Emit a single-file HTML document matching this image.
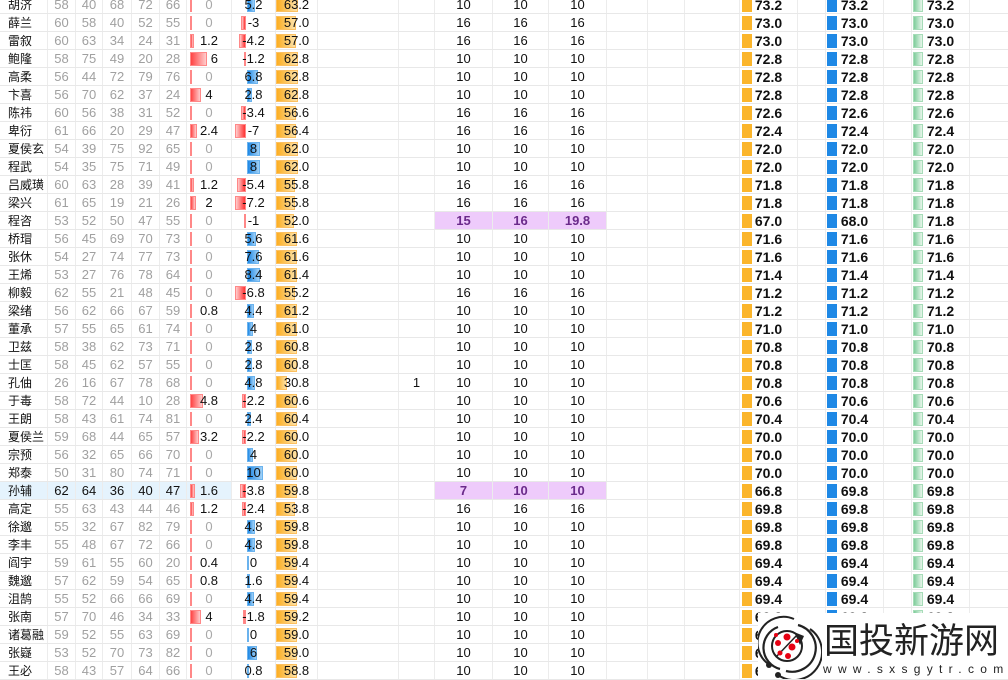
<!DOCTYPE html>
<html><head><meta charset="utf-8"><style>
*{margin:0;padding:0;box-sizing:border-box}
body{width:1008px;height:679px;overflow:hidden;background:#fff;font-family:"Liberation Sans","Noto Sans CJK SC",sans-serif;font-size:13px;color:#111;position:relative}
#t{position:absolute;left:0;top:-4px}
.r{display:flex;height:18px;border-bottom:1px solid #e8e8e8}
.r>div{height:17px;line-height:18px;text-align:center;border-right:1px solid #ececec;position:relative;white-space:nowrap}
.r>div:nth-child(1){width:48px;text-align:left;padding-left:8px;font-size:12px}
.r>div:nth-child(2){width:28px;color:#a0a0a0}
.r>div:nth-child(3){width:27px;color:#a0a0a0}
.r>div:nth-child(4){width:29px;color:#a0a0a0}
.r>div:nth-child(5){width:28px;color:#a0a0a0}
.r>div:nth-child(6){width:27px;color:#a0a0a0}
.r>div:nth-child(7){width:45px}
.r>div:nth-child(8){width:44px}
.r>div:nth-child(9){width:42px}
.r>div:nth-child(10){width:81px}
.r>div:nth-child(11){width:36px}
.r>div:nth-child(12){width:58px}
.r>div:nth-child(13){width:56px}
.r>div:nth-child(14){width:58px}
.r>div:nth-child(15){width:41px}
.r>div:nth-child(16){width:37px}
.r>div:nth-child(17){width:55px}
.r>div:nth-child(18){width:58px;font-weight:bold;font-size:14px}
.r>div:nth-child(19){width:28px}
.r>div:nth-child(20){width:58px;font-weight:bold;font-size:14px}
.r>div:nth-child(21){width:28px}
.r>div:nth-child(22){width:58px;font-weight:bold;font-size:14px}
.r>div:nth-child(23){width:38px;border-right:none}
.r span{position:relative}
.g{color:#a8a8a8}
i{position:absolute;top:2px;height:14px;display:block}
.rb{left:3px;background:linear-gradient(90deg,#f44,#fcc);border:1px solid #f88}
.bp{left:15px;background:linear-gradient(90deg,#1e88e5,#9fd0f7);border:1px solid #6bb3ee}
.bn{right:29px;background:linear-gradient(270deg,#f33,#fcc);border:1px solid #f88}
.ob{left:0;background:linear-gradient(90deg,#fcae22,#fde2a8);border:1px solid #fcc060}
.o2{left:2px;width:10px;background:#fbb52b}
.b2{left:1px;width:10px;background:#1e88e5}
.g2{left:1px;width:10px;background:linear-gradient(90deg,#7fcd9b,#e6f5ea);border:1px solid #a6dcb8}
.p{background:#eecbfb;color:#6a2a8a;font-weight:bold}
.hl>div:nth-child(-n+7){background:#e5f3fd}
.hl>div:nth-child(n+2):nth-child(-n+6){color:#111}
#logo{position:absolute;left:758px;top:613px;width:250px;height:66px;background:#fff}
</style></head><body>
<div id="t">
<div class="r"><div>胡济</div><div>58</div><div>40</div><div>68</div><div>72</div><div>66</div><div><i class="rb" style="width:2px"></i><span class="g">0</span></div><div><i class="bp" style="width:8px"></i><span>5.2</span></div><div><i class="ob" style="width:22px"></i><span>63.2</span></div><div></div><div></div><div>10</div><div>10</div><div>10</div><div></div><div></div><div></div><div><i class="o2"></i><span>73.2</span></div><div></div><div><i class="b2"></i><span>73.2</span></div><div></div><div><i class="g2"></i><span>73.2</span></div><div></div></div>
<div class="r"><div>薛兰</div><div>60</div><div>58</div><div>40</div><div>52</div><div>55</div><div><i class="rb" style="width:2px"></i><span class="g">0</span></div><div><i class="bn" style="width:5px"></i><span>-3</span></div><div><i class="ob" style="width:20px"></i><span>57.0</span></div><div></div><div></div><div>16</div><div>16</div><div>16</div><div></div><div></div><div></div><div><i class="o2"></i><span>73.0</span></div><div></div><div><i class="b2"></i><span>73.0</span></div><div></div><div><i class="g2"></i><span>73.0</span></div><div></div></div>
<div class="r"><div>雷叙</div><div>60</div><div>63</div><div>34</div><div>24</div><div>31</div><div><i class="rb" style="width:4px"></i><span>1.2</span></div><div><i class="bn" style="width:7px"></i><span>-4.2</span></div><div><i class="ob" style="width:20px"></i><span>57.0</span></div><div></div><div></div><div>16</div><div>16</div><div>16</div><div></div><div></div><div></div><div><i class="o2"></i><span>73.0</span></div><div></div><div><i class="b2"></i><span>73.0</span></div><div></div><div><i class="g2"></i><span>73.0</span></div><div></div></div>
<div class="r"><div>鲍隆</div><div>58</div><div>75</div><div>49</div><div>20</div><div>28</div><div><i class="rb" style="width:17px"></i><span>&nbsp;&nbsp;&nbsp;6</span></div><div><i class="bn" style="width:2px"></i><span>-1.2</span></div><div><i class="ob" style="width:22px"></i><span>62.8</span></div><div></div><div></div><div>10</div><div>10</div><div>10</div><div></div><div></div><div></div><div><i class="o2"></i><span>72.8</span></div><div></div><div><i class="b2"></i><span>72.8</span></div><div></div><div><i class="g2"></i><span>72.8</span></div><div></div></div>
<div class="r"><div>高柔</div><div>56</div><div>44</div><div>72</div><div>79</div><div>76</div><div><i class="rb" style="width:2px"></i><span class="g">0</span></div><div><i class="bp" style="width:11px"></i><span>6.8</span></div><div><i class="ob" style="width:22px"></i><span>62.8</span></div><div></div><div></div><div>10</div><div>10</div><div>10</div><div></div><div></div><div></div><div><i class="o2"></i><span>72.8</span></div><div></div><div><i class="b2"></i><span>72.8</span></div><div></div><div><i class="g2"></i><span>72.8</span></div><div></div></div>
<div class="r"><div>卞喜</div><div>56</div><div>70</div><div>62</div><div>37</div><div>24</div><div><i class="rb" style="width:11px"></i><span>4</span></div><div><i class="bp" style="width:5px"></i><span>2.8</span></div><div><i class="ob" style="width:22px"></i><span>62.8</span></div><div></div><div></div><div>10</div><div>10</div><div>10</div><div></div><div></div><div></div><div><i class="o2"></i><span>72.8</span></div><div></div><div><i class="b2"></i><span>72.8</span></div><div></div><div><i class="g2"></i><span>72.8</span></div><div></div></div>
<div class="r"><div>陈祎</div><div>60</div><div>56</div><div>38</div><div>31</div><div>52</div><div><i class="rb" style="width:2px"></i><span class="g">0</span></div><div><i class="bn" style="width:5px"></i><span>-3.4</span></div><div><i class="ob" style="width:20px"></i><span>56.6</span></div><div></div><div></div><div>16</div><div>16</div><div>16</div><div></div><div></div><div></div><div><i class="o2"></i><span>72.6</span></div><div></div><div><i class="b2"></i><span>72.6</span></div><div></div><div><i class="g2"></i><span>72.6</span></div><div></div></div>
<div class="r"><div>卑衍</div><div>61</div><div>66</div><div>20</div><div>29</div><div>47</div><div><i class="rb" style="width:7px"></i><span>2.4</span></div><div><i class="bn" style="width:11px"></i><span>-7</span></div><div><i class="ob" style="width:20px"></i><span>56.4</span></div><div></div><div></div><div>16</div><div>16</div><div>16</div><div></div><div></div><div></div><div><i class="o2"></i><span>72.4</span></div><div></div><div><i class="b2"></i><span>72.4</span></div><div></div><div><i class="g2"></i><span>72.4</span></div><div></div></div>
<div class="r"><div>夏侯玄</div><div>54</div><div>39</div><div>75</div><div>92</div><div>65</div><div><i class="rb" style="width:2px"></i><span class="g">0</span></div><div><i class="bp" style="width:13px"></i><span>8</span></div><div><i class="ob" style="width:22px"></i><span>62.0</span></div><div></div><div></div><div>10</div><div>10</div><div>10</div><div></div><div></div><div></div><div><i class="o2"></i><span>72.0</span></div><div></div><div><i class="b2"></i><span>72.0</span></div><div></div><div><i class="g2"></i><span>72.0</span></div><div></div></div>
<div class="r"><div>程武</div><div>54</div><div>35</div><div>75</div><div>71</div><div>49</div><div><i class="rb" style="width:2px"></i><span class="g">0</span></div><div><i class="bp" style="width:13px"></i><span>8</span></div><div><i class="ob" style="width:22px"></i><span>62.0</span></div><div></div><div></div><div>10</div><div>10</div><div>10</div><div></div><div></div><div></div><div><i class="o2"></i><span>72.0</span></div><div></div><div><i class="b2"></i><span>72.0</span></div><div></div><div><i class="g2"></i><span>72.0</span></div><div></div></div>
<div class="r"><div>吕威璜</div><div>60</div><div>63</div><div>28</div><div>39</div><div>41</div><div><i class="rb" style="width:4px"></i><span>1.2</span></div><div><i class="bn" style="width:9px"></i><span>-5.4</span></div><div><i class="ob" style="width:19px"></i><span>55.8</span></div><div></div><div></div><div>16</div><div>16</div><div>16</div><div></div><div></div><div></div><div><i class="o2"></i><span>71.8</span></div><div></div><div><i class="b2"></i><span>71.8</span></div><div></div><div><i class="g2"></i><span>71.8</span></div><div></div></div>
<div class="r"><div>梁兴</div><div>61</div><div>65</div><div>19</div><div>21</div><div>26</div><div><i class="rb" style="width:6px"></i><span>2</span></div><div><i class="bn" style="width:11px"></i><span>-7.2</span></div><div><i class="ob" style="width:19px"></i><span>55.8</span></div><div></div><div></div><div>16</div><div>16</div><div>16</div><div></div><div></div><div></div><div><i class="o2"></i><span>71.8</span></div><div></div><div><i class="b2"></i><span>71.8</span></div><div></div><div><i class="g2"></i><span>71.8</span></div><div></div></div>
<div class="r"><div>程咨</div><div>53</div><div>52</div><div>50</div><div>47</div><div>55</div><div><i class="rb" style="width:2px"></i><span class="g">0</span></div><div><i class="bn" style="width:2px"></i><span>-1</span></div><div><i class="ob" style="width:18px"></i><span>52.0</span></div><div></div><div></div><div class="p">15</div><div class="p">16</div><div class="p">19.8</div><div></div><div></div><div></div><div><i class="o2"></i><span>67.0</span></div><div></div><div><i class="b2"></i><span>68.0</span></div><div></div><div><i class="g2"></i><span>71.8</span></div><div></div></div>
<div class="r"><div>桥瑁</div><div>56</div><div>45</div><div>69</div><div>70</div><div>73</div><div><i class="rb" style="width:2px"></i><span class="g">0</span></div><div><i class="bp" style="width:9px"></i><span>5.6</span></div><div><i class="ob" style="width:21px"></i><span>61.6</span></div><div></div><div></div><div>10</div><div>10</div><div>10</div><div></div><div></div><div></div><div><i class="o2"></i><span>71.6</span></div><div></div><div><i class="b2"></i><span>71.6</span></div><div></div><div><i class="g2"></i><span>71.6</span></div><div></div></div>
<div class="r"><div>张休</div><div>54</div><div>27</div><div>74</div><div>77</div><div>73</div><div><i class="rb" style="width:2px"></i><span class="g">0</span></div><div><i class="bp" style="width:12px"></i><span>7.6</span></div><div><i class="ob" style="width:21px"></i><span>61.6</span></div><div></div><div></div><div>10</div><div>10</div><div>10</div><div></div><div></div><div></div><div><i class="o2"></i><span>71.6</span></div><div></div><div><i class="b2"></i><span>71.6</span></div><div></div><div><i class="g2"></i><span>71.6</span></div><div></div></div>
<div class="r"><div>王烯</div><div>53</div><div>27</div><div>76</div><div>78</div><div>64</div><div><i class="rb" style="width:2px"></i><span class="g">0</span></div><div><i class="bp" style="width:13px"></i><span>8.4</span></div><div><i class="ob" style="width:21px"></i><span>61.4</span></div><div></div><div></div><div>10</div><div>10</div><div>10</div><div></div><div></div><div></div><div><i class="o2"></i><span>71.4</span></div><div></div><div><i class="b2"></i><span>71.4</span></div><div></div><div><i class="g2"></i><span>71.4</span></div><div></div></div>
<div class="r"><div>柳毅</div><div>62</div><div>55</div><div>21</div><div>48</div><div>45</div><div><i class="rb" style="width:2px"></i><span class="g">0</span></div><div><i class="bn" style="width:11px"></i><span>-6.8</span></div><div><i class="ob" style="width:19px"></i><span>55.2</span></div><div></div><div></div><div>16</div><div>16</div><div>16</div><div></div><div></div><div></div><div><i class="o2"></i><span>71.2</span></div><div></div><div><i class="b2"></i><span>71.2</span></div><div></div><div><i class="g2"></i><span>71.2</span></div><div></div></div>
<div class="r"><div>梁绪</div><div>56</div><div>62</div><div>66</div><div>67</div><div>59</div><div><i class="rb" style="width:2px"></i><span>0.8</span></div><div><i class="bp" style="width:7px"></i><span>4.4</span></div><div><i class="ob" style="width:21px"></i><span>61.2</span></div><div></div><div></div><div>10</div><div>10</div><div>10</div><div></div><div></div><div></div><div><i class="o2"></i><span>71.2</span></div><div></div><div><i class="b2"></i><span>71.2</span></div><div></div><div><i class="g2"></i><span>71.2</span></div><div></div></div>
<div class="r"><div>董承</div><div>57</div><div>55</div><div>65</div><div>61</div><div>74</div><div><i class="rb" style="width:2px"></i><span class="g">0</span></div><div><i class="bp" style="width:6px"></i><span>4</span></div><div><i class="ob" style="width:21px"></i><span>61.0</span></div><div></div><div></div><div>10</div><div>10</div><div>10</div><div></div><div></div><div></div><div><i class="o2"></i><span>71.0</span></div><div></div><div><i class="b2"></i><span>71.0</span></div><div></div><div><i class="g2"></i><span>71.0</span></div><div></div></div>
<div class="r"><div>卫兹</div><div>58</div><div>38</div><div>62</div><div>73</div><div>71</div><div><i class="rb" style="width:2px"></i><span class="g">0</span></div><div><i class="bp" style="width:5px"></i><span>2.8</span></div><div><i class="ob" style="width:21px"></i><span>60.8</span></div><div></div><div></div><div>10</div><div>10</div><div>10</div><div></div><div></div><div></div><div><i class="o2"></i><span>70.8</span></div><div></div><div><i class="b2"></i><span>70.8</span></div><div></div><div><i class="g2"></i><span>70.8</span></div><div></div></div>
<div class="r"><div>士匡</div><div>58</div><div>45</div><div>62</div><div>57</div><div>55</div><div><i class="rb" style="width:2px"></i><span class="g">0</span></div><div><i class="bp" style="width:5px"></i><span>2.8</span></div><div><i class="ob" style="width:21px"></i><span>60.8</span></div><div></div><div></div><div>10</div><div>10</div><div>10</div><div></div><div></div><div></div><div><i class="o2"></i><span>70.8</span></div><div></div><div><i class="b2"></i><span>70.8</span></div><div></div><div><i class="g2"></i><span>70.8</span></div><div></div></div>
<div class="r"><div>孔伷</div><div>26</div><div>16</div><div>67</div><div>78</div><div>68</div><div><i class="rb" style="width:2px"></i><span class="g">0</span></div><div><i class="bp" style="width:8px"></i><span>4.8</span></div><div><i class="ob" style="width:11px"></i><span>30.8</span></div><div></div><div>1</div><div>10</div><div>10</div><div>10</div><div></div><div></div><div></div><div><i class="o2"></i><span>70.8</span></div><div></div><div><i class="b2"></i><span>70.8</span></div><div></div><div><i class="g2"></i><span>70.8</span></div><div></div></div>
<div class="r"><div>于毒</div><div>58</div><div>72</div><div>44</div><div>10</div><div>28</div><div><i class="rb" style="width:13px"></i><span>4.8</span></div><div><i class="bn" style="width:4px"></i><span>-2.2</span></div><div><i class="ob" style="width:21px"></i><span>60.6</span></div><div></div><div></div><div>10</div><div>10</div><div>10</div><div></div><div></div><div></div><div><i class="o2"></i><span>70.6</span></div><div></div><div><i class="b2"></i><span>70.6</span></div><div></div><div><i class="g2"></i><span>70.6</span></div><div></div></div>
<div class="r"><div>王朗</div><div>58</div><div>43</div><div>61</div><div>74</div><div>81</div><div><i class="rb" style="width:2px"></i><span class="g">0</span></div><div><i class="bp" style="width:4px"></i><span>2.4</span></div><div><i class="ob" style="width:21px"></i><span>60.4</span></div><div></div><div></div><div>10</div><div>10</div><div>10</div><div></div><div></div><div></div><div><i class="o2"></i><span>70.4</span></div><div></div><div><i class="b2"></i><span>70.4</span></div><div></div><div><i class="g2"></i><span>70.4</span></div><div></div></div>
<div class="r"><div>夏侯兰</div><div>59</div><div>68</div><div>44</div><div>65</div><div>57</div><div><i class="rb" style="width:9px"></i><span>3.2</span></div><div><i class="bn" style="width:4px"></i><span>-2.2</span></div><div><i class="ob" style="width:21px"></i><span>60.0</span></div><div></div><div></div><div>10</div><div>10</div><div>10</div><div></div><div></div><div></div><div><i class="o2"></i><span>70.0</span></div><div></div><div><i class="b2"></i><span>70.0</span></div><div></div><div><i class="g2"></i><span>70.0</span></div><div></div></div>
<div class="r"><div>宗预</div><div>56</div><div>32</div><div>65</div><div>66</div><div>70</div><div><i class="rb" style="width:2px"></i><span class="g">0</span></div><div><i class="bp" style="width:6px"></i><span>4</span></div><div><i class="ob" style="width:21px"></i><span>60.0</span></div><div></div><div></div><div>10</div><div>10</div><div>10</div><div></div><div></div><div></div><div><i class="o2"></i><span>70.0</span></div><div></div><div><i class="b2"></i><span>70.0</span></div><div></div><div><i class="g2"></i><span>70.0</span></div><div></div></div>
<div class="r"><div>郑泰</div><div>50</div><div>31</div><div>80</div><div>74</div><div>71</div><div><i class="rb" style="width:2px"></i><span class="g">0</span></div><div><i class="bp" style="width:16px"></i><span>10</span></div><div><i class="ob" style="width:21px"></i><span>60.0</span></div><div></div><div></div><div>10</div><div>10</div><div>10</div><div></div><div></div><div></div><div><i class="o2"></i><span>70.0</span></div><div></div><div><i class="b2"></i><span>70.0</span></div><div></div><div><i class="g2"></i><span>70.0</span></div><div></div></div>
<div class="r hl"><div>孙辅</div><div>62</div><div>64</div><div>36</div><div>40</div><div>47</div><div><i class="rb" style="width:5px"></i><span>1.6</span></div><div><i class="bn" style="width:6px"></i><span>-3.8</span></div><div><i class="ob" style="width:21px"></i><span>59.8</span></div><div></div><div></div><div class="p">7</div><div class="p">10</div><div class="p">10</div><div></div><div></div><div></div><div><i class="o2"></i><span>66.8</span></div><div></div><div><i class="b2"></i><span>69.8</span></div><div></div><div><i class="g2"></i><span>69.8</span></div><div></div></div>
<div class="r"><div>高定</div><div>55</div><div>63</div><div>43</div><div>44</div><div>46</div><div><i class="rb" style="width:4px"></i><span>1.2</span></div><div><i class="bn" style="width:4px"></i><span>-2.4</span></div><div><i class="ob" style="width:19px"></i><span>53.8</span></div><div></div><div></div><div>16</div><div>16</div><div>16</div><div></div><div></div><div></div><div><i class="o2"></i><span>69.8</span></div><div></div><div><i class="b2"></i><span>69.8</span></div><div></div><div><i class="g2"></i><span>69.8</span></div><div></div></div>
<div class="r"><div>徐邈</div><div>55</div><div>32</div><div>67</div><div>82</div><div>79</div><div><i class="rb" style="width:2px"></i><span class="g">0</span></div><div><i class="bp" style="width:8px"></i><span>4.8</span></div><div><i class="ob" style="width:21px"></i><span>59.8</span></div><div></div><div></div><div>10</div><div>10</div><div>10</div><div></div><div></div><div></div><div><i class="o2"></i><span>69.8</span></div><div></div><div><i class="b2"></i><span>69.8</span></div><div></div><div><i class="g2"></i><span>69.8</span></div><div></div></div>
<div class="r"><div>李丰</div><div>55</div><div>48</div><div>67</div><div>72</div><div>66</div><div><i class="rb" style="width:2px"></i><span class="g">0</span></div><div><i class="bp" style="width:8px"></i><span>4.8</span></div><div><i class="ob" style="width:21px"></i><span>59.8</span></div><div></div><div></div><div>10</div><div>10</div><div>10</div><div></div><div></div><div></div><div><i class="o2"></i><span>69.8</span></div><div></div><div><i class="b2"></i><span>69.8</span></div><div></div><div><i class="g2"></i><span>69.8</span></div><div></div></div>
<div class="r"><div>阎宇</div><div>59</div><div>61</div><div>55</div><div>60</div><div>20</div><div><i class="rb" style="width:2px"></i><span>0.4</span></div><div><i class="bp" style="width:1px"></i><span>0</span></div><div><i class="ob" style="width:21px"></i><span>59.4</span></div><div></div><div></div><div>10</div><div>10</div><div>10</div><div></div><div></div><div></div><div><i class="o2"></i><span>69.4</span></div><div></div><div><i class="b2"></i><span>69.4</span></div><div></div><div><i class="g2"></i><span>69.4</span></div><div></div></div>
<div class="r"><div>魏邈</div><div>57</div><div>62</div><div>59</div><div>54</div><div>65</div><div><i class="rb" style="width:2px"></i><span>0.8</span></div><div><i class="bp" style="width:3px"></i><span>1.6</span></div><div><i class="ob" style="width:21px"></i><span>59.4</span></div><div></div><div></div><div>10</div><div>10</div><div>10</div><div></div><div></div><div></div><div><i class="o2"></i><span>69.4</span></div><div></div><div><i class="b2"></i><span>69.4</span></div><div></div><div><i class="g2"></i><span>69.4</span></div><div></div></div>
<div class="r"><div>沮鹄</div><div>55</div><div>52</div><div>66</div><div>66</div><div>69</div><div><i class="rb" style="width:2px"></i><span class="g">0</span></div><div><i class="bp" style="width:7px"></i><span>4.4</span></div><div><i class="ob" style="width:21px"></i><span>59.4</span></div><div></div><div></div><div>10</div><div>10</div><div>10</div><div></div><div></div><div></div><div><i class="o2"></i><span>69.4</span></div><div></div><div><i class="b2"></i><span>69.4</span></div><div></div><div><i class="g2"></i><span>69.4</span></div><div></div></div>
<div class="r"><div>张南</div><div>57</div><div>70</div><div>46</div><div>34</div><div>33</div><div><i class="rb" style="width:11px"></i><span>4</span></div><div><i class="bn" style="width:3px"></i><span>-1.8</span></div><div><i class="ob" style="width:21px"></i><span>59.2</span></div><div></div><div></div><div>10</div><div>10</div><div>10</div><div></div><div></div><div></div><div><i class="o2"></i><span>69.2</span></div><div></div><div><i class="b2"></i><span>69.2</span></div><div></div><div><i class="g2"></i><span>69.2</span></div><div></div></div>
<div class="r"><div>诸葛融</div><div>59</div><div>52</div><div>55</div><div>63</div><div>69</div><div><i class="rb" style="width:2px"></i><span class="g">0</span></div><div><i class="bp" style="width:1px"></i><span>0</span></div><div><i class="ob" style="width:21px"></i><span>59.0</span></div><div></div><div></div><div>10</div><div>10</div><div>10</div><div></div><div></div><div></div><div><i class="o2"></i><span>69.0</span></div><div></div><div><i class="b2"></i><span>69.0</span></div><div></div><div><i class="g2"></i><span>69.0</span></div><div></div></div>
<div class="r"><div>张嶷</div><div>53</div><div>52</div><div>70</div><div>73</div><div>82</div><div><i class="rb" style="width:2px"></i><span class="g">0</span></div><div><i class="bp" style="width:10px"></i><span>6</span></div><div><i class="ob" style="width:21px"></i><span>59.0</span></div><div></div><div></div><div>10</div><div>10</div><div>10</div><div></div><div></div><div></div><div><i class="o2"></i><span>69.0</span></div><div></div><div><i class="b2"></i><span>69.0</span></div><div></div><div><i class="g2"></i><span>69.0</span></div><div></div></div>
<div class="r"><div>王必</div><div>58</div><div>43</div><div>57</div><div>64</div><div>66</div><div><i class="rb" style="width:2px"></i><span class="g">0</span></div><div><i class="bp" style="width:1px"></i><span>0.8</span></div><div><i class="ob" style="width:21px"></i><span>58.8</span></div><div></div><div></div><div>10</div><div>10</div><div>10</div><div></div><div></div><div></div><div><i class="o2"></i><span>68.8</span></div><div></div><div><i class="b2"></i><span>68.8</span></div><div></div><div><i class="g2"></i><span>68.8</span></div><div></div></div>
</div>
<div id="logo">
<svg width="64" height="66" style="position:absolute;left:0;top:0">
<path d="M22 56 A22 22 0 0 1 20 14" fill="none" stroke="#222" stroke-width="2.2"/>
<path d="M12 52 A26 26 0 0 1 36 6" fill="none" stroke="#222" stroke-width="2"/>
<path d="M40 12 A22 22 0 0 1 28 58" fill="none" stroke="#222" stroke-width="2.2"/>
<path d="M52 16 A26 26 0 0 1 20 62" fill="none" stroke="#222" stroke-width="2"/>
<circle cx="11" cy="52" r="3" fill="#222"/><circle cx="20" cy="62" r="3" fill="#222"/>
<circle cx="29" cy="33" r="15" fill="#fff" stroke="#222" stroke-width="2"/>
<path d="M36 19 L46 23 L42 32 Z" fill="#222"/>
<line x1="18" y1="44" x2="40" y2="21" stroke="#222" stroke-width="1.5"/>
<circle cx="29" cy="24" r="3.5" fill="#e60012"/><circle cx="20" cy="30" r="3" fill="#e60012"/>
<circle cx="34" cy="34" r="3.5" fill="#e60012"/><circle cx="22" cy="40" r="2.5" fill="#e60012"/>
<circle cx="30" cy="43" r="3" fill="#e60012"/><circle cx="39" cy="28" r="2" fill="#e60012"/><circle cx="18" cy="22" r="2" fill="#e60012"/>
</svg>
<div style="position:absolute;left:66px;top:5px;font-size:35px;line-height:42px;color:#222;font-family:'Noto Sans CJK SC',sans-serif;letter-spacing:0px">国投新游网</div>
<div style="position:absolute;left:65px;top:49px;font-size:12px;line-height:14px;color:#222;letter-spacing:6.3px">www.sxsgytr.com</div>
</div>
</body></html>
